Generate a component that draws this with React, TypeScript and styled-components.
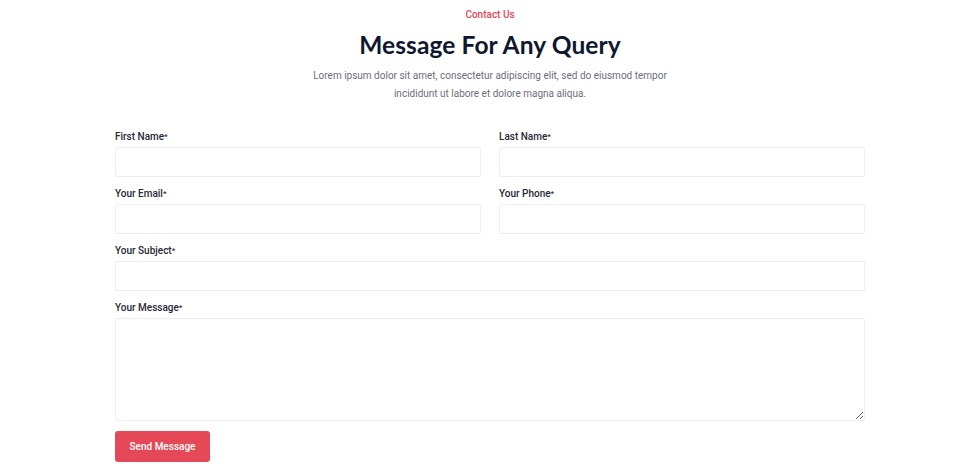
import * as React from "react";
import styled, { createGlobalStyle } from "styled-components";

const GlobalStyle = createGlobalStyle`
  html, body {
    margin: 0;
    padding: 0;
    background: #fff;
  }
  body {
    font-family: Roboto, "Liberation Sans", sans-serif;
  }
  * {
    box-sizing: border-box;
  }
`;

const Section = styled.section`
  width: 750px;
  margin: 0 auto;
  padding-top: 8px;
`;

const Header = styled.header`
  text-align: center;
  margin-bottom: 27px;
`;

const Eyebrow = styled.div`
  color: #e84654;
  font-size: 10px;
  font-weight: 500;
  line-height: 14px;
`;

const Title = styled.h1`
  margin: 7px 0 6px;
  font-family: Lato, "Noto Sans", sans-serif;
  font-size: 24.5px;
  font-weight: 700;
  line-height: 32px;
  color: #0f1730;
  letter-spacing: 0.1px;
`;

const Lead = styled.p`
  margin: 0 auto;
  max-width: 372px;
  color: #6e6d7c;
  font-size: 10px;
  line-height: 18px;
`;

const Form = styled.form`
  display: grid;
  grid-template-columns: 1fr 1fr;
  column-gap: 18px;
  row-gap: 10px;
`;

const Field = styled.div<{ $wide?: boolean }>`
  display: flex;
  flex-direction: column;
  grid-column: ${(p) => (p.$wide ? "1 / -1" : "auto")};
`;

const Label = styled.label`
  font-size: 10px;
  font-weight: 500;
  color: #272936;
  line-height: 13px;
  margin-bottom: 4px;

  &::after {
    content: "*";
    font-size: 8px;
    vertical-align: 1px;
  }
`;

const Input = styled.input`
  height: 30px;
  border: 1px solid #efeff2;
  border-radius: 2px;
  background: #fff;
  outline: none;
  padding: 0 10px;
  font: inherit;
`;

const TextArea = styled.textarea`
  height: 103px;
  border: 1px solid #efeff2;
  border-radius: 2px;
  background: #fff;
  outline: none;
  padding: 8px 10px;
  font: inherit;
  resize: vertical;
`;

const Submit = styled.button`
  grid-column: 1 / -1;
  justify-self: start;
  width: 95px;
  height: 31px;
  margin-top: 0;
  border: none;
  border-radius: 3px;
  background: #e54856;
  color: #fff;
  font-family: Roboto, "Liberation Sans", sans-serif;
  font-size: 10px;
  font-weight: 500;
  cursor: pointer;
`;

export default function App() {
  return (
    <>
      <GlobalStyle />
      <Section>
        <Header>
          <Eyebrow>Contact Us</Eyebrow>
          <Title>Message For Any Query</Title>
          <Lead>
            Lorem ipsum dolor sit amet, consectetur adipiscing elit, sed do
            eiusmod tempor incididunt ut labore et dolore magna aliqua.
          </Lead>
        </Header>
        <Form onSubmit={(e) => e.preventDefault()}>
          <Field>
            <Label>First Name</Label>
            <Input />
          </Field>
          <Field>
            <Label>Last Name</Label>
            <Input />
          </Field>
          <Field>
            <Label>Your Email</Label>
            <Input type="email" />
          </Field>
          <Field>
            <Label>Your Phone</Label>
            <Input type="tel" />
          </Field>
          <Field $wide>
            <Label>Your Subject</Label>
            <Input />
          </Field>
          <Field $wide>
            <Label>Your Message</Label>
            <TextArea />
          </Field>
          <Submit type="submit">Send Message</Submit>
        </Form>
      </Section>
    </>
  );
}
